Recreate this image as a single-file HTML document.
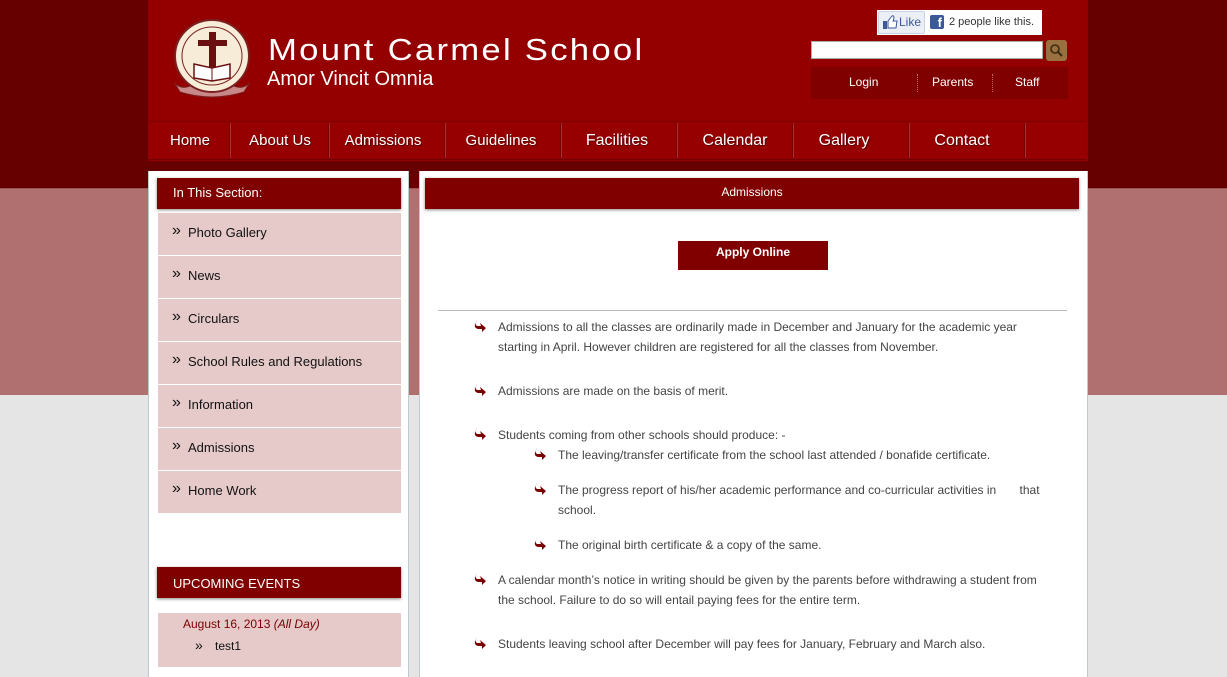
<!DOCTYPE html>
<html><head><meta charset="utf-8"><style>
*{margin:0;padding:0;box-sizing:border-box}
body{width:1227px;height:677px;overflow:hidden;font-family:"Liberation Sans",Arial,sans-serif;background:#e5e5e5;position:relative}
.a{position:absolute}
#b1{left:0;top:0;width:1227px;height:188px;background:#660000}
#b2{left:0;top:188px;width:1227px;height:207px;background:#b07070;border-top:1px solid #9a5555}
#hdr{left:148px;top:0;width:940px;height:161px;background:#940000}
.nav{top:121px;height:39px;border-top:1px solid #7a0000;border-bottom:1px solid #700000;background:#960000}
.nv{position:absolute;top:121px;height:39px;line-height:40px;color:#fff;font-size:15px;text-align:center;text-shadow:1px 1px 1px #500}
.sep{position:absolute;top:123px;height:35px;width:2px;border-left:1px solid #7a0000;border-right:1px solid #a83030}
.side{background:#fff;border-left:1px solid #c0c8d0;border-right:1px solid #c0c8d0}
.hb{background:#800000;color:#fff;font-size:13px;box-shadow:0 1px 3px #888}
.it{position:absolute;left:158px;width:243px;height:42px;background:#e6caca;font-size:13px;color:#111;line-height:40px;padding-left:30px}
.it:before{content:"»";position:absolute;left:14px;top:-2px;font-size:16px}
.p{position:absolute;font-size:12px;color:#444;line-height:20px}
.bl{position:absolute;width:12px;height:12px}
</style></head><body>
<div id="b1" class="a"></div><div id="b2" class="a"></div>
<div id="hdr" class="a"></div>
<svg class="a" style="left:170px;top:18px" width="84" height="80" viewBox="0 0 84 80">
<path d="M4 64 Q10 72 20 68 L64 68 Q74 72 80 64 L74 74 Q42 84 10 74Z" fill="#c88888" stroke="#7a2020"/>
<ellipse cx="42" cy="38" rx="37" ry="36" fill="#f7ecd8" stroke="#7a2020" stroke-width="2"/>
<ellipse cx="42" cy="38" rx="30" ry="29" fill="none" stroke="#7a2020" stroke-width="1"/>
<rect x="39" y="14" width="7" height="40" fill="#6a1010"/><rect x="28" y="22" width="29" height="6" fill="#6a1010"/>
<path d="M24 46 L42 50 L60 46 L60 60 L42 63 L24 60Z" fill="#fff" stroke="#6a1010" stroke-width="1.5"/><line x1="42" y1="50" x2="42" y2="63" stroke="#6a1010"/>
</svg>
<div class="a" style="left:268px;top:32px;color:#fff;font-size:31px;letter-spacing:2px;transform:scaleX(1.12);transform-origin:left top;white-space:nowrap">Mount Carmel School</div>
<div class="a" style="left:267px;top:68px;color:#fff;font-size:20px">Amor Vincit Omnia</div>
<div class="a" style="left:877px;top:10px;width:165px;height:25px;background:#fff"></div>
<div class="a" style="left:878px;top:11px;width:47px;height:23px;background:#eceef5;border:1px solid #cad4e7;border-radius:2px;font-size:12px;color:#3b5998;line-height:21px;padding-left:20px">Like</div>
<svg class="a" style="left:883px;top:15px" width="15" height="14"><rect x="0" y="6" width="4" height="8" fill="#3b5998"/><path d="M5 6 L9 1 Q11 0 11 3 L10 6 L14 6 L13 13 L5 13Z" fill="#fff" stroke="#3b5998"/></svg>
<div class="a" style="left:930px;top:15px;width:14px;height:14px;background:#3b5998;border-radius:2px;color:#fff;font-weight:bold;font-size:13px;line-height:16px;text-align:right;padding-right:2px">f</div>
<div class="a" style="left:949px;top:16px;font-size:11px;color:#333">2 people like this.</div>
<div class="a" style="left:811px;top:41px;width:232px;height:18px;background:#fff;border:1px solid #aaa"></div>
<div class="a" style="left:1046px;top:40px;width:21px;height:21px;background:#9a7040;border-radius:3px"></div>
<svg class="a" style="left:1049px;top:43px" width="15" height="15"><circle cx="6" cy="6" r="4" fill="none" stroke="#3a2a10" stroke-width="1.6"/><line x1="9" y1="9" x2="13" y2="13" stroke="#3a2a10" stroke-width="2"/></svg>
<div class="a" style="left:811px;top:67px;width:257px;height:32px;background:#800000"></div>
<div class="a" style="left:849px;top:75px;color:#fff;font-size:12px">Login</div>
<div class="a" style="left:932px;top:75px;color:#fff;font-size:12px">Parents</div>
<div class="a" style="left:1015px;top:75px;color:#fff;font-size:12px">Staff</div>
<div class="a" style="left:917px;top:74px;height:18px;border-left:1px dotted #c66"></div>
<div class="a" style="left:992px;top:74px;height:18px;border-left:1px dotted #c66"></div>
<div class="a nav" style="left:148px;width:938px"></div>
<div class="nv" style="left:150px;width:80px">Home</div>
<div class="sep" style="left:229px"></div>
<div class="nv" style="left:231px;width:98px">About Us</div>
<div class="sep" style="left:328px"></div>
<div class="nv" style="left:330px;width:106px">Admissions</div>
<div class="sep" style="left:444px"></div>
<div class="nv" style="left:446px;width:110px">Guidelines</div>
<div class="sep" style="left:560px"></div>
<div class="nv" style="left:562px;width:110px;font-size:16px">Facilities</div>
<div class="sep" style="left:676px"></div>
<div class="nv" style="left:678px;width:114px;font-size:16px">Calendar</div>
<div class="sep" style="left:792px"></div>
<div class="nv" style="left:794px;width:100px;font-size:16px">Gallery</div>
<div class="sep" style="left:908px"></div>
<div class="nv" style="left:910px;width:104px;font-size:16px">Contact</div>
<div class="sep" style="left:1024px"></div>
<div class="a side" style="left:148px;top:171px;width:261px;height:506px"></div>
<div class="a hb" style="left:157px;top:178px;width:244px;height:31px;line-height:30px;padding-left:16px">In This Section:</div>
<div class="it" style="top:213px">Photo Gallery</div>
<div class="it" style="top:256px">News</div>
<div class="it" style="top:299px">Circulars</div>
<div class="it" style="top:342px">School Rules and Regulations</div>
<div class="it" style="top:385px">Information</div>
<div class="it" style="top:428px">Admissions</div>
<div class="it" style="top:471px">Home Work</div>
<div class="a hb" style="left:157px;top:567px;width:244px;height:31px;line-height:34px;padding-left:16px">UPCOMING EVENTS</div>
<div class="a" style="left:158px;top:613px;width:243px;height:54px;background:#e6caca"></div>
<div class="a" style="left:183px;top:617px;font-size:12px;color:#7a0000">August 16, 2013 <i>(All Day)</i></div>
<div class="a" style="left:195px;top:637px;font-size:14px;color:#111">»</div>
<div class="a" style="left:215px;top:639px;font-size:12px;color:#111">test1</div>
<div class="a side" style="left:419px;top:171px;width:669px;height:506px"></div>
<div class="a hb" style="left:425px;top:178px;width:654px;height:31px;line-height:28px;text-align:center;font-size:12px">Admissions</div>
<div class="a" style="left:678px;top:241px;width:150px;height:29px;background:#800000;color:#fff;font-weight:bold;font-size:12px;text-align:center;line-height:22px">Apply Online</div>
<div class="a" style="left:438px;top:310px;width:629px;border-top:1px solid #bbb"></div>
<svg class="bl" style="left:474px;top:320px" viewBox="0 0 12 12"><path d="M3 0 Q0 4 3 6 L7 6 L6 3 L12 8 L8 12 L8 9 L4 9 Q0 8 1 4Z" fill="#7a0000"/></svg>
<div class="p" style="left:498px;top:317px">Admissions to all the classes are ordinarily made in December and January for the academic year<br>starting in April. However children are registered for all the classes from November.</div>
<svg class="bl" style="left:474px;top:384px" viewBox="0 0 12 12"><path d="M3 0 Q0 4 3 6 L7 6 L6 3 L12 8 L8 12 L8 9 L4 9 Q0 8 1 4Z" fill="#7a0000"/></svg>
<div class="p" style="left:498px;top:381px">Admissions are made on the basis of merit.</div>
<svg class="bl" style="left:474px;top:428px" viewBox="0 0 12 12"><path d="M3 0 Q0 4 3 6 L7 6 L6 3 L12 8 L8 12 L8 9 L4 9 Q0 8 1 4Z" fill="#7a0000"/></svg>
<div class="p" style="left:498px;top:425px">Students coming from other schools should produce: -</div>
<svg class="bl" style="left:534px;top:448px" viewBox="0 0 12 12"><path d="M3 0 Q0 4 3 6 L7 6 L6 3 L12 8 L8 12 L8 9 L4 9 Q0 8 1 4Z" fill="#7a0000"/></svg>
<div class="p" style="left:558px;top:445px">The leaving/transfer certificate from the school last attended / bonafide certificate.</div>
<svg class="bl" style="left:534px;top:483px" viewBox="0 0 12 12"><path d="M3 0 Q0 4 3 6 L7 6 L6 3 L12 8 L8 12 L8 9 L4 9 Q0 8 1 4Z" fill="#7a0000"/></svg>
<div class="p" style="left:558px;top:480px">The progress report of his/her academic performance and co-curricular activities in &nbsp;&nbsp;&nbsp;&nbsp;&nbsp; that<br>school.</div>
<svg class="bl" style="left:534px;top:538px" viewBox="0 0 12 12"><path d="M3 0 Q0 4 3 6 L7 6 L6 3 L12 8 L8 12 L8 9 L4 9 Q0 8 1 4Z" fill="#7a0000"/></svg>
<div class="p" style="left:558px;top:535px">The original birth certificate &amp; a copy of the same.</div>
<svg class="bl" style="left:474px;top:573px" viewBox="0 0 12 12"><path d="M3 0 Q0 4 3 6 L7 6 L6 3 L12 8 L8 12 L8 9 L4 9 Q0 8 1 4Z" fill="#7a0000"/></svg>
<div class="p" style="left:498px;top:570px">A calendar month’s notice in writing should be given by the parents before withdrawing a student from<br>the school. Failure to do so will entail paying fees for the entire term.</div>
<svg class="bl" style="left:474px;top:637px" viewBox="0 0 12 12"><path d="M3 0 Q0 4 3 6 L7 6 L6 3 L12 8 L8 12 L8 9 L4 9 Q0 8 1 4Z" fill="#7a0000"/></svg>
<div class="p" style="left:498px;top:634px">Students leaving school after December will pay fees for January, February and March also.</div>
</body></html>
